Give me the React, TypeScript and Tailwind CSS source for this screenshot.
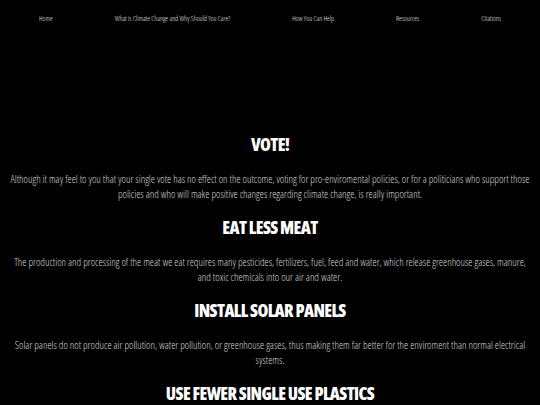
import React from 'react';

const links = ['Home', 'What is Climate Change and Why Should You Care?', 'How You Can Help', 'Resources', 'Citations'];

const tips = [
  {
    title: 'Vote!',
    text: 'Although it may feel to you that your single vote has no effect on the outcome, voting for pro-enviromental policies, or for a politicians who support those policies and who will make positive changes regarding climate change, is really important.',
  },
  {
    title: 'Eat Less Meat',
    text: 'The production and processing of the meat we eat requires many pesticides, fertilizers, fuel, feed and water, which release greenhouse gases, manure, and toxic chemicals into our air and water.',
  },
  {
    title: 'Install Solar Panels',
    text: 'Solar panels do not produce air pollution, water pollution, or greenhouse gases, thus making them far better for the enviroment than normal electrical systems.',
  },
  {
    title: 'Use Fewer Single Use Plastics',
    text: '',
  },
];

export default function App() {
  return (
    <div className="min-h-screen bg-black text-white font-['Open_Sans',sans-serif] [font-stretch:75%] overflow-hidden h-[405px]">
      {/* nav */}
      <nav className="flex justify-around items-center px-2 pt-[13px] h-[25px] text-[7px] leading-[10px] text-[#e5e5e5] font-light">
        {links.map((l) => (
          <a key={l} href="#">{l}</a>
        ))}
      </nav>

      <main className="pt-[108px] px-2 text-center">
        {tips.map((t) => (
          <section key={t.title} className="mb-[14px]">
            <h2 className="uppercase font-extrabold text-[17.5px] leading-[22px] tracking-[-0.6px] mb-[17px]">{t.title}</h2>
            {t.text && <p className="text-[10.5px] leading-[15px] text-[#d4d4d4] font-light">{t.text}</p>}
          </section>
        ))}
      </main>
    </div>
  );
}
